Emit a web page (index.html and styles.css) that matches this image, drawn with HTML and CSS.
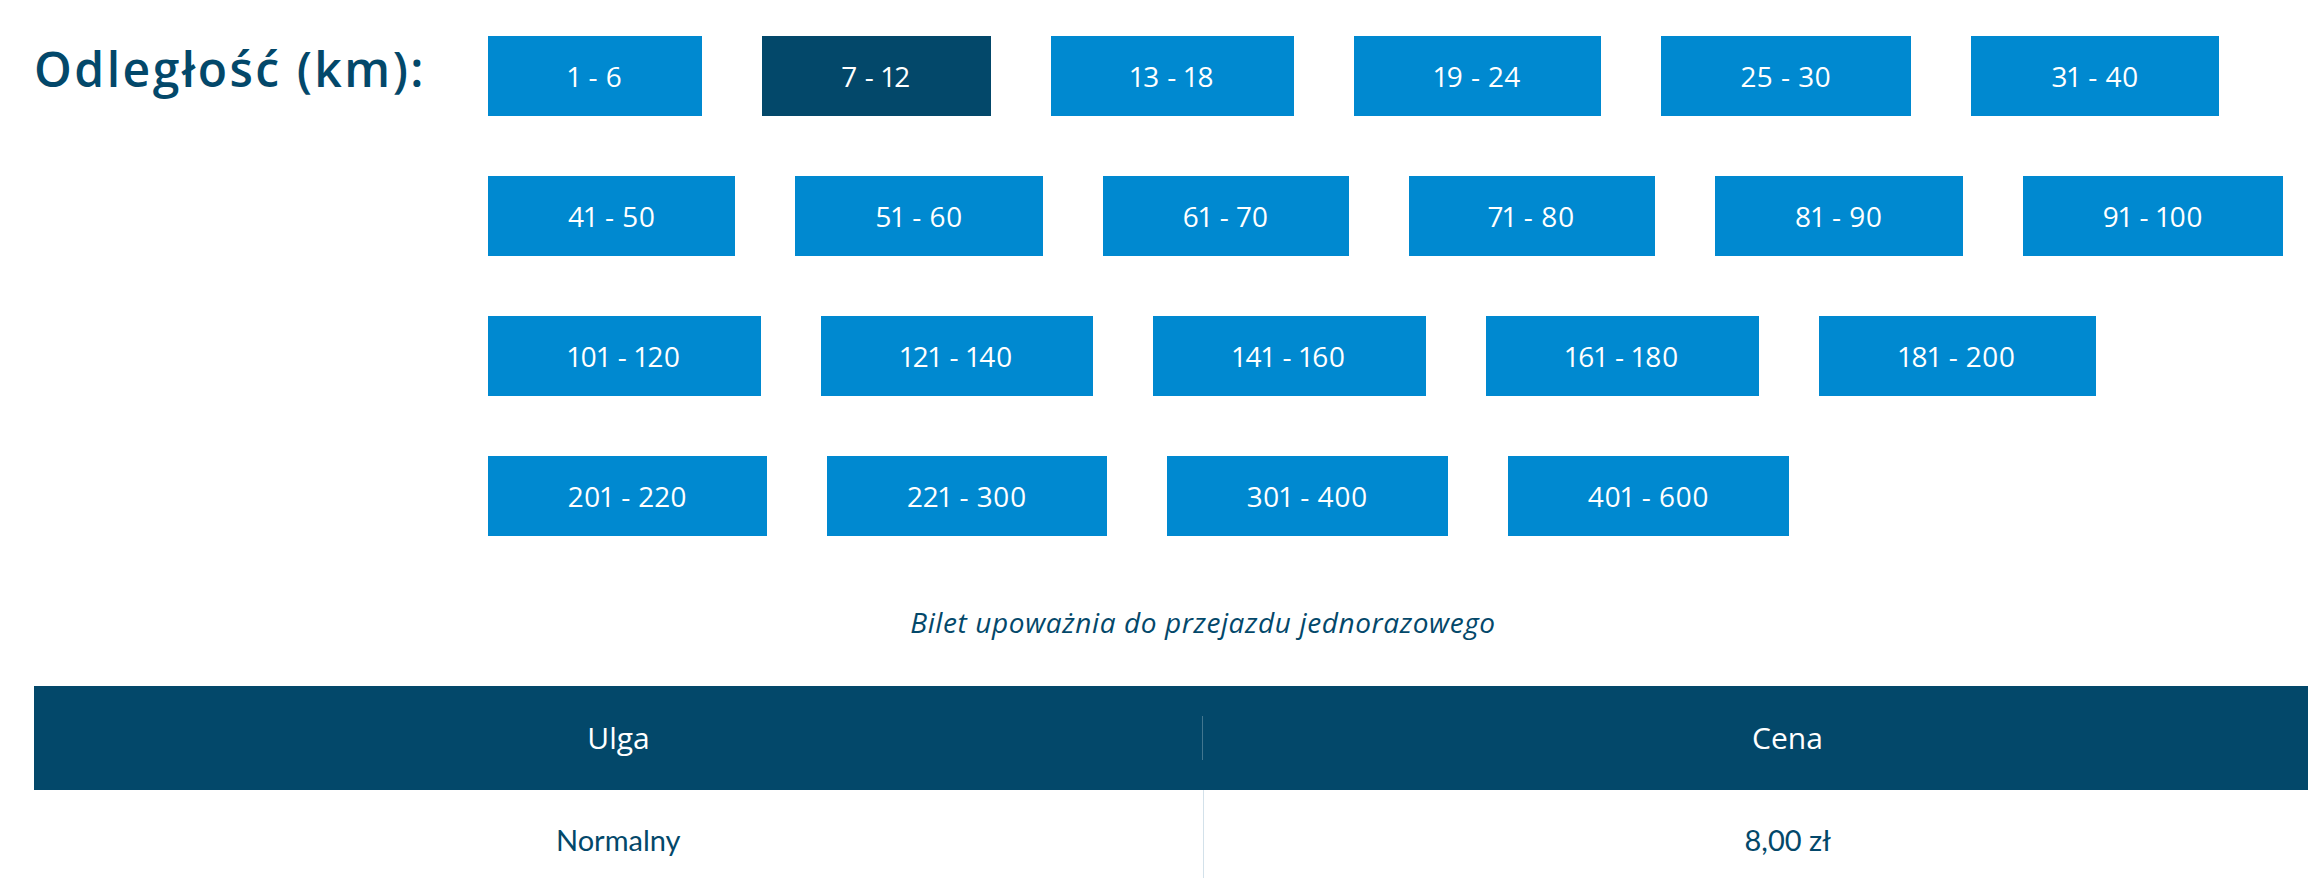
FILE: index.html
```html
<!DOCTYPE html>
<html lang="pl">
<head>
  <meta charset="UTF-8">
  <title>Cennik biletów</title>
  <meta name="viewport" content="width=device-width, initial-scale=1.0">
  <link rel="stylesheet" href="styles.css">
</head>
<body>
  <div class="page">
    <div class="distance">
      <h2 class="distance-label">Odległość (km):</h2>
      <div class="distance-options">
        <button class="distance-btn">1 - 6</button>
        <button class="distance-btn active">7 - 12</button>
        <button class="distance-btn">13 - 18</button>
        <button class="distance-btn">19 - 24</button>
        <button class="distance-btn">25 - 30</button>
        <button class="distance-btn">31 - 40</button>
        <button class="distance-btn">41 - 50</button>
        <button class="distance-btn">51 - 60</button>
        <button class="distance-btn">61 - 70</button>
        <button class="distance-btn">71 - 80</button>
        <button class="distance-btn">81 - 90</button>
        <button class="distance-btn">91 - 100</button>
        <button class="distance-btn">101 - 120</button>
        <button class="distance-btn">121 - 140</button>
        <button class="distance-btn">141 - 160</button>
        <button class="distance-btn">161 - 180</button>
        <button class="distance-btn">181 - 200</button>
        <button class="distance-btn">201 - 220</button>
        <button class="distance-btn">221 - 300</button>
        <button class="distance-btn">301 - 400</button>
        <button class="distance-btn">401 - 600</button>
      </div>
    </div>

    <p class="ticket-note">Bilet upoważnia do przejazdu jednorazowego</p>

    <table class="price-table">
      <thead>
        <tr>
          <th>Ulga</th>
          <th>Cena</th>
        </tr>
      </thead>
      <tbody>
        <tr>
          <td>Normalny</td>
          <td>8,00 zł</td>
        </tr>
      </tbody>
    </table>
  </div>

  <script>
    // wybór przedziału odległości
    const distanceButtons = document.querySelectorAll('.distance-btn');

    distanceButtons.forEach(btn => {
      btn.addEventListener('click', function() {
        distanceButtons.forEach(b => b.classList.remove('active'));
        this.classList.add('active');
      });
    });
  </script>
</body>
</html>
```

FILE: styles.css
```css
body {
  margin: 0;
  background: #fff;
  overflow: hidden;
  font-family: 'Open Sans', 'Noto Sans', sans-serif;
  color: #03486a;
}

.page {
  width: 2338px;
  margin-left: 34px;
}

.distance {
  display: flex;
  align-items: flex-start;
}

.distance-label {
  flex: 0 0 454px;
  margin: 0;
  padding-top: 40px;
  font-size: 48px;
  font-weight: 600;
  letter-spacing: 2.5px;
  line-height: 1.2;
  color: #03486a;
}

.distance-options {
  flex: 1;
  display: flex;
  flex-wrap: wrap;
  gap: 60px;
  padding-top: 36px;
}

.distance-btn {
  height: 80px;
  padding: 0 80px;
  border: none;
  background: #0089d0;
  color: #fff;
  font-family: 'Open Sans', 'Noto Sans', sans-serif;
  font-size: 28px;
  font-weight: 500;
  letter-spacing: 0.5px;
  font-variant-numeric: proportional-nums;
  cursor: pointer;
  transition: background 0.2s ease;
}

.distance-btn:hover {
  background: #0277b5;
}

.distance-btn.active {
  background: #03486a;
}

.ticket-note {
  margin: 70px 0 46px;
  text-align: center;
  font-family: 'Open Sans', sans-serif;
  font-style: italic;
  font-size: 28px;
  letter-spacing: 0.6px;
  line-height: 1.2;
  color: #03486a;
}

.price-table {
  width: 100%;
  border-collapse: collapse;
  table-layout: fixed;
}

.price-table th {
  position: relative;
  height: 104px;
  padding: 0;
  background: #03486a;
  color: #fff;
  font-size: 30px;
  font-weight: 500;
}

.price-table th:first-child::after {
  content: "";
  position: absolute;
  right: 0;
  top: 30px;
  width: 1px;
  height: 44px;
  background: rgba(255,255,255,0.25);
}

.price-table td {
  height: 100px;
  padding: 0;
  text-align: center;
  font-family: 'Lato', sans-serif;
  font-size: 29px;
  color: #03486a;
}

.price-table td:first-child {
  border-right: 1px solid #d3e1ea;
}
```
